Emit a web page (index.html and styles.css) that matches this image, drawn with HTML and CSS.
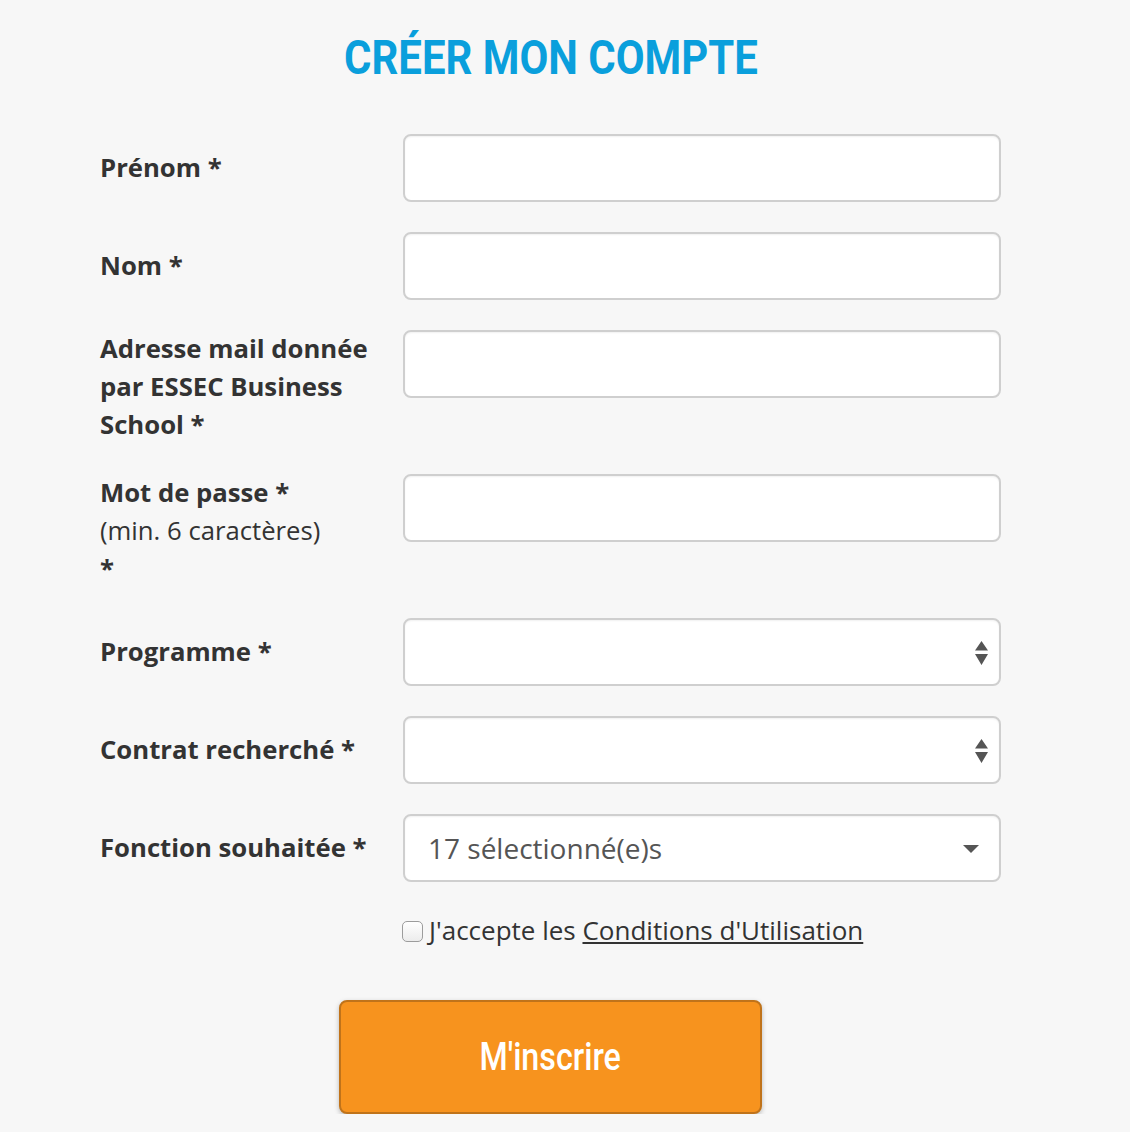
FILE: index.html
```html
<!DOCTYPE html>
<html lang="fr">
<head>
<meta charset="utf-8">
<title>Créer mon compte</title>
<link rel="stylesheet" href="styles.css">
</head>
<body>
<main class="page">
  <h1 class="title"><span class="title-text">CRÉER MON COMPTE</span></h1>
  <form class="form">
    <div class="row">
      <label class="label">Prénom *</label>
      <div class="input"></div>
    </div>
    <div class="row">
      <label class="label">Nom *</label>
      <div class="input"></div>
    </div>
    <div class="row row-top">
      <label class="label">Adresse mail donnée par ESSEC Business School *</label>
      <div class="input"></div>
    </div>
    <div class="row row-top">
      <label class="label">Mot de passe *<br><span class="hint">(min. 6 caractères)</span><br>*</label>
      <div class="input"></div>
    </div>
    <div class="row">
      <label class="label">Programme *</label>
      <div class="input select">
        <svg class="updown" width="13" height="25" viewBox="0 0 13 25"><path d="M6.5 0 L13 9.5 L0 9.5 Z M0 13 L13 13 L6.5 24 Z" fill="#555"/></svg>
      </div>
    </div>
    <div class="row">
      <label class="label">Contrat recherché *</label>
      <div class="input select">
        <svg class="updown" width="13" height="25" viewBox="0 0 13 25"><path d="M6.5 0 L13 9.5 L0 9.5 Z M0 13 L13 13 L6.5 24 Z" fill="#555"/></svg>
      </div>
    </div>
    <div class="row">
      <label class="label">Fonction souhaitée *</label>
      <div class="input select multi">
        <span class="value">17 sélectionné(e)s</span>
        <svg class="caret" width="16" height="8" viewBox="0 0 16 8"><path d="M0 0 L16 0 L8 8 Z" fill="#555"/></svg>
      </div>
    </div>
    <div class="terms">
      <span class="checkbox"></span>
      <span class="terms-text">J'accepte les <a class="link" href="#">Conditions d'Utilisation</a></span>
    </div>
    <div class="actions">
      <button type="button" class="btn"><span class="btn-text">M'inscrire</span></button>
    </div>
  </form>
</main>
</body>
</html>
```

FILE: styles.css
```css
* { box-sizing: border-box; }
html, body {
  margin: 0;
  padding: 0;
  background: #f7f7f7;
}
body {
  font-family: "Open Sans", "Liberation Sans", sans-serif;
  color: #333;
}
.page {
  width: 901px;
  margin-left: 100px;
  padding-top: 26px;
}
.title {
  margin: 0 0 40px;
  text-align: center;
  font-family: Roboto, "Liberation Sans", sans-serif;
  font-weight: 700;
  font-size: 49px;
  line-height: 64px;
  color: #0a9fdc;
  height: 68px;
}
.title-text {
  display: inline-block;
  transform: scaleX(0.855);
  transform-origin: center;
}
.form { display: block; }
.row {
  display: grid;
  grid-template-columns: 303px 598px;
  align-items: center;
  margin-bottom: 30px;
}
.row-top { align-items: start; }
.label {
  font-weight: 700;
  font-size: 25.7px;
  line-height: 38px;
  color: #333;
  padding-right: 14px;
}
.hint { font-weight: 400; }
.input {
  height: 68px;
  background: #fff;
  border: 2px solid #cfcfcf;
  border-radius: 8px;
  box-shadow: inset 0 1px 2px rgba(0,0,0,0.06);
  position: relative;
}
.select {
  display: flex;
  align-items: center;
  justify-content: flex-end;
  padding: 0 11px 0 23px;
}
.updown { display: block; margin-top: 3px; }
.multi { justify-content: space-between; padding-right: 20px; }
.value {
  font-size: 28px;
  color: #555;
}
.caret { display: block; margin-top: 2px; }
.terms {
  display: flex;
  align-items: center;
  margin-left: 302px;
  margin-top: 31px;
  font-size: 26px;
  line-height: 34px;
  color: #333;
}
.checkbox {
  width: 21px;
  height: 21px;
  border: 1px solid #9c9c9c;
  border-radius: 5px;
  background: linear-gradient(#fff, #ececec);
  margin-right: 6px;
  margin-top: 3px;
}
.link { color: #333; text-decoration: underline; }
.actions {
  display: flex;
  justify-content: center;
  margin-top: 53px;
}
.btn {
  width: 423px;
  height: 114px;
  background: #f7931e;
  border: 2px solid #c0731a;
  border-radius: 8px;
  box-shadow: 0 2px 5px rgba(0,0,0,0.25);
  color: #fff;
  font-family: Roboto, "Liberation Sans", sans-serif;
  font-size: 38px;
  font-weight: 500;
  padding: 0;
}
.btn-text {
  display: inline-block;
  transform: scaleX(0.85);
}
```
